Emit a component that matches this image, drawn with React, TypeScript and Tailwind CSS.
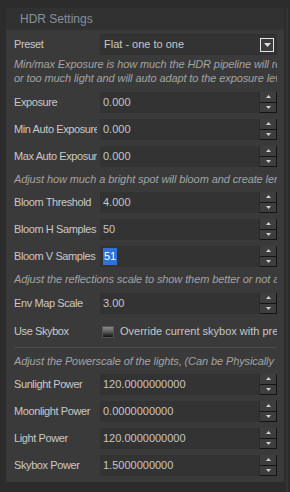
import React from 'react';

const font = { fontFamily: '"Liberation Sans", Arial, sans-serif' };

const Spinner: React.FC = () => (
    <div className="flex flex-col w-[18px] h-full border-l border-[#2a2a2a]">
        <div className="flex-1 flex items-center justify-center bg-[#3e3e3e] border-r border-b border-[#141414]">
            <svg width="5" height="3" viewBox="0 0 5 3"><path d="M2.5 0 L5 3 L0 3 Z" fill="#d0d0d0" /></svg>
        </div>
        <div className="flex-1 flex items-center justify-center bg-[#3e3e3e] border-r border-b border-[#141414]">
            <svg width="5" height="3" viewBox="0 0 5 3"><path d="M0 0 L5 0 L2.5 3 Z" fill="#d0d0d0" /></svg>
        </div>
    </div>
);

const labelCls = 'w-[83px] mr-[3px] shrink-0 overflow-hidden whitespace-nowrap text-[11px] tracking-[-0.4px] text-[#c8c8c8]';

const NumRow: React.FC<{ label: string; value: string; selected?: boolean; className?: string }> = ({ label, value, selected, className }) => (
    <div className={`flex items-center h-[21px] ${className ?? ''}`}>
        <div className={labelCls}>{label}</div>
        <div className="flex-1 flex h-full bg-[#333333]">
            <div className="flex-1 flex items-center pl-[3px] text-[11px] text-[#c6c6c6]">
                {selected ? <span className="bg-[#3072d8] text-white px-[1px]">{value}</span> : value}
            </div>
            <Spinner />
        </div>
    </div>
);

const Desc: React.FC<{ lines: string[]; className?: string }> = ({ lines, className }) => (
    <div className={`overflow-hidden whitespace-nowrap italic text-[11px] leading-[14px] tracking-[-0.1px] text-[#a3a3a3] ${className ?? ''}`}>
        {lines.map((l) => (
            <div key={l}>{l}</div>
        ))}
    </div>
);

export default function App() {
    return (
        <div className="w-[290px] h-[492px] bg-[#2c2c2c] overflow-hidden flex pt-[8px]" style={font}>
            <div className="w-[278px] ml-[6px] flex flex-col h-[474px]">
                <div className="h-[22px] flex items-center pl-[14px] bg-[#313131] text-[12px] text-[#8592a0]">HDR Settings</div>
                <div className="flex-1 bg-[#3a3a3a] pl-[8px] pr-[7px] pt-[4px]">
                    <div className="flex items-center h-[21px]">
                        <div className={labelCls}>Preset</div>
                        <div className="flex-1 flex items-center h-full bg-[#333333] pl-[3px] pr-[2px] border border-[#2e2e2e]">
                            <span className="flex-1 text-[11px] text-[#c6c6c6]">Flat - one to one</span>
                            <div className="w-[14px] h-[14px] border border-[#e6e6e6] flex items-center justify-center bg-[#3c3c3c]">
                                <svg width="7" height="4" viewBox="0 0 7 4"><path d="M0 0 L7 0 L3.5 4 Z" fill="#e0e0e0" /></svg>
                            </div>
                        </div>
                    </div>
                    <Desc className="mt-[2px]" lines={['Min/max Exposure is how much the HDR pipeline will react to too little', 'or too much light and will auto adapt to the exposure level']} />
                    <NumRow className="mt-[7px]" label="Exposure" value="0.000" />
                    <NumRow className="mt-[6px]" label="Min Auto Exposure" value="0.000" />
                    <NumRow className="mt-[6px]" label="Max Auto Exposure" value="0.000" />
                    <Desc className="mt-[5px]" lines={['Adjust how much a bright spot will bloom and create lens flare']} />
                    <NumRow className="mt-[6px]" label="Bloom Threshold" value="4.000" />
                    <NumRow className="mt-[6px]" label="Bloom H Samples" value="50" />
                    <NumRow className="mt-[6px]" label="Bloom V Samples" value="51" selected />
                    <Desc className="mt-[5px]" lines={['Adjust the reflections scale to show them better or not at all']} />
                    <NumRow className="mt-[7px]" label="Env Map Scale" value="3.00" />
                    <div className="flex items-center h-[21px] mt-[7px]">
                        <div className={labelCls}>Use Skybox</div>
                        <div className="flex-1 flex items-center overflow-hidden whitespace-nowrap pl-[2px]">
                            <div className="w-[12px] h-[12px] shrink-0 border border-[#555555] bg-gradient-to-b from-[#8a8a8a] via-[#5a5a5a] to-[#111111]" />
                            <span className="ml-[6px] text-[11px] text-[#c6c6c6]">Override current skybox with preset one</span>
                        </div>
                    </div>
                    <div className="h-px bg-[#4e4e4e] mt-[5px]" />
                    <Desc className="mt-[6px]" lines={['Adjust the Powerscale of the lights, (Can be Physically based)']} />
                    <NumRow className="mt-[6px]" label="Sunlight Power" value="120.0000000000" />
                    <NumRow className="mt-[6px]" label="Moonlight Power" value="0.0000000000" />
                    <NumRow className="mt-[6px]" label="Light Power" value="120.0000000000" />
                    <NumRow className="mt-[6px]" label="Skybox Power" value="1.5000000000" />
                </div>
            </div>
            <div className="w-[2px] ml-[2px] bg-[#353535] h-[484px]" />
        </div>
    );
}
